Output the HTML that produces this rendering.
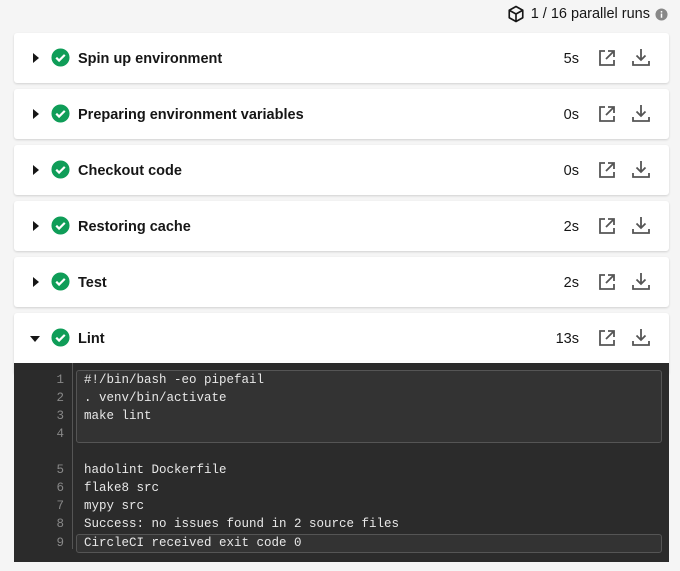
<!DOCTYPE html>
<html><head><style>
body{margin:0;width:680px;height:571px;background:#f5f5f5;font-family:"Liberation Sans",sans-serif;position:relative;overflow:hidden;color:#161616}
.top{position:absolute;right:12px;top:5px;font-size:14.5px;display:flex;align-items:center;color:#161616}
.card{position:absolute;left:14px;width:655px;height:50px;background:#fff;border-radius:3px;box-shadow:0 1px 2px rgba(0,0,0,.15)}
.card .t{position:absolute;left:64px;top:18px;font-weight:bold;font-size:14.5px}
.card .d{position:absolute;right:90px;top:18px;font-size:14.5px}
.card svg{position:absolute}
.code{position:absolute;left:14px;top:363px;width:655px;height:199px;background:#2b2b2b;font-family:"Liberation Mono",monospace;font-size:12.5px;color:#e8e8e8}
.ln{position:absolute;left:0;width:50px;text-align:right;color:#888}
.cl{position:absolute;left:70px}
.sep{position:absolute;left:58px;top:0;width:1px;height:186px;background:#555}
.box{position:absolute;left:62px;width:584px;border:1px solid #555;border-radius:3px;background:#333}
</style></head><body>
<div class="top"><svg width="18" height="18" viewBox="0 0 24 24" fill="none" stroke="#161616" stroke-width="2.2" stroke-linejoin="round"><path d="M12 2l9 5v10l-9 5-9-5V7z M3 7l9 5 9-5 M12 12v10"/></svg><span style="margin-left:6px">1 / 16 parallel runs</span><svg style="margin-left:5px" width="13" height="13" viewBox="0 0 14 14"><circle cx="7" cy="7" r="6.5" fill="#888"/><rect x="6.2" y="6" width="1.6" height="4.5" fill="#fff"/><rect x="6.2" y="3.3" width="1.6" height="1.6" fill="#fff"/></svg></div>

<div class="card" style="top:33px"></div>
<div class="card" style="top:89px"></div>
<div class="card" style="top:145px"></div>
<div class="card" style="top:201px"></div>
<div class="card" style="top:257px"></div>
<div class="card" style="top:313px;height:60px;border-radius:3px 3px 0 0"></div>
<div id="c"></div>
<script>
const rows=[["Spin up environment","5s",33,0],["Preparing environment variables","0s",89,0],["Checkout code","0s",145,0],["Restoring cache","2s",201,0],["Test","2s",257,0],["Lint","13s",313,1]];
let h="";
for(const [t,d,y,o] of rows){
h+=`<div class="card" style="top:${y}px;background:none;box-shadow:none">
${o?'<svg style="left:16px;top:22px" width="10" height="8"><path d="M0 1h10L5 7z" fill="#161616"/></svg>':'<svg style="left:19px;top:20px" width="6" height="10"><path d="M0 0v10l6-5z" fill="#161616"/></svg>'}
<svg style="left:37px;top:15px" width="19" height="19" viewBox="0 0 20 20"><circle cx="10" cy="10" r="9.5" fill="#0f9d58"/><path d="M5.5 10.2l3 3 6-6" stroke="#fff" stroke-width="2.3" fill="none"/></svg>
<div class="t">${t}</div><div class="d">${d}</div>
<svg style="left:584px;top:16px" width="18" height="18" viewBox="0 0 18 18" fill="none" stroke="#555" stroke-width="1.8"><path d="M7 2H2v14h14v-5 M10 2h6v6 M16 2L8 10"/></svg>
<svg style="left:617px;top:14px" width="20" height="20" viewBox="0 0 20 20" fill="none" stroke="#555" stroke-width="1.8"><path d="M10 2v11 M5.5 8.5L10 13l4.5-4.5 M2 14v4h16v-4"/></svg>
</div>`;}
document.getElementById("c").innerHTML=h;
</script>
<div class="code">
<div class="sep"></div>
<div class="box" style="top:7px;height:71px"></div>
<div class="box" style="top:171px;height:17px"></div>
<div class="ln" style="top:10px">1</div><div class="cl" style="top:10px">#!/bin/bash -eo pipefail</div>
<div class="ln" style="top:28px">2</div><div class="cl" style="top:28px">. venv/bin/activate</div>
<div class="ln" style="top:46px">3</div><div class="cl" style="top:46px">make lint</div>
<div class="ln" style="top:64px">4</div>
<div class="ln" style="top:100px">5</div><div class="cl" style="top:100px">hadolint Dockerfile</div>
<div class="ln" style="top:118px">6</div><div class="cl" style="top:118px">flake8 src</div>
<div class="ln" style="top:136px">7</div><div class="cl" style="top:136px">mypy src</div>
<div class="ln" style="top:154px">8</div><div class="cl" style="top:154px">Success: no issues found in 2 source files</div>
<div class="ln" style="top:173px">9</div><div class="cl" style="top:173px">CircleCI received exit code 0</div>
</div>
</body></html>
